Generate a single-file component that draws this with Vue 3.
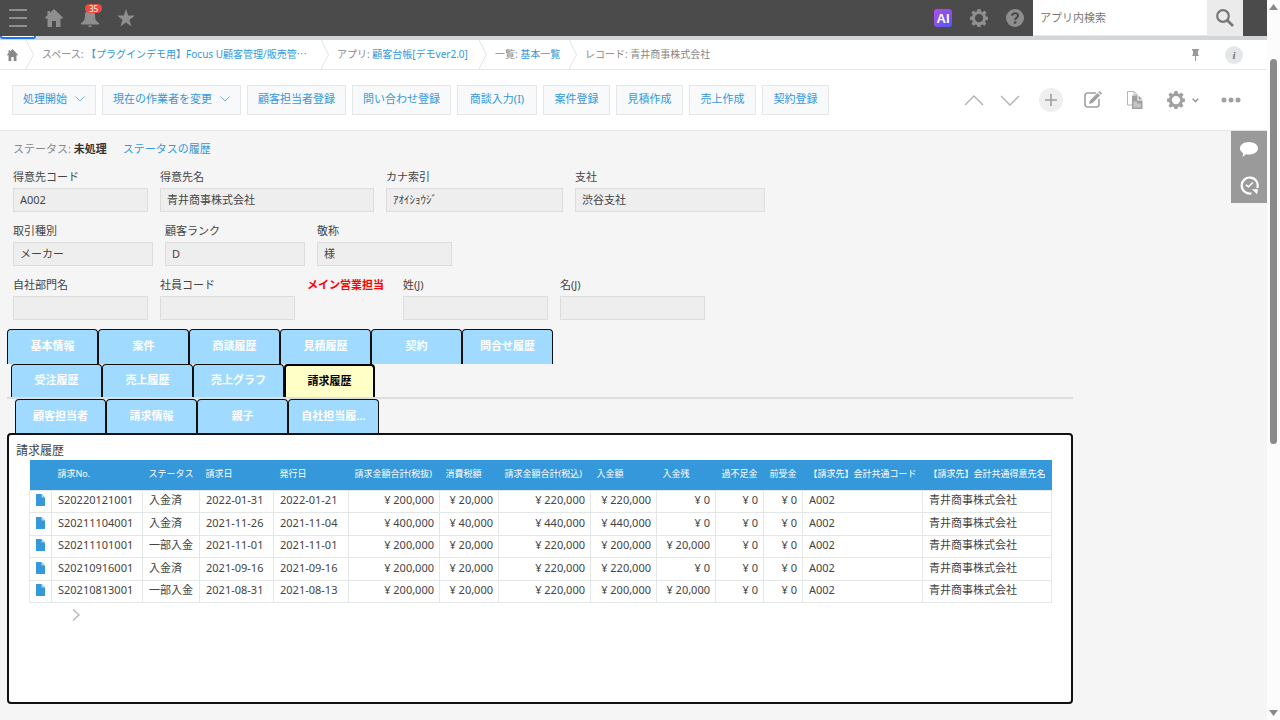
<script setup>
import { ref } from 'vue'

const actions = [
  { label: '処理開始', menu: true },
  { label: '現在の作業者を変更', menu: true },
  { label: '顧客担当者登録' },
  { label: '問い合わせ登録' },
  { label: '商談入力(I)', medium: true },
  { label: '案件登録' },
  { label: '見積作成' },
  { label: '売上作成' },
  { label: '契約登録' },
]

const fieldRows = [
  [
    { id: 'code', label: '得意先コード', value: 'A002', size: 'w135' },
    { id: 'name', label: '得意先名', value: '青井商事株式会社', size: 'w214' },
    { id: 'kana', label: 'カナ索引', value: 'ｱｵｲｼｮｳｼﾞ', size: 'w177' },
    { id: 'branch', label: '支社', value: '渋谷支社', size: 'w190' },
  ],
  [
    { id: 'type', label: '取引種別', value: 'メーカー', size: 'w140' },
    { id: 'rank', label: '顧客ランク', value: 'D', size: 'w140' },
    { id: 'title', label: '敬称', value: '様', size: 'w135' },
  ],
  [
    { id: 'dept', label: '自社部門名', value: '', size: 'w135' },
    { id: 'staff', label: '社員コード', value: '', size: 'w135' },
    { id: 'main', label: 'メイン営業担当', heading: true, size: 'w84' },
    { id: 'last', label: '姓(J)', value: '', size: 'w145' },
    { id: 'first', label: '名(J)', value: '', size: 'w145' },
  ],
]

const tabRows = [
  ['基本情報', '案件', '商談履歴', '見積履歴', '契約', '問合せ履歴'],
  ['受注履歴', '売上履歴', '売上グラフ', '請求履歴'],
  ['顧客担当者', '請求情報', '親子', '自社担当履...'],
]
const activeTab = ref('請求履歴')

const columns = [
  '', '請求No.', 'ステータス', '請求日', '発行日', '請求金額合計(税抜)', '消費税額',
  '請求金額合計(税込)', '入金額', '入金残', '過不足金', '前受金',
  '【請求先】会計共通コード', '【請求先】会計共通得意先名',
]
const rows = [
  ['S20220121001', '入金済', '2022-01-31', '2022-01-21', '¥ 200,000', '¥ 20,000', '¥ 220,000', '¥ 220,000', '¥ 0', '¥ 0', '¥ 0', 'A002', '青井商事株式会社'],
  ['S20211104001', '入金済', '2021-11-26', '2021-11-04', '¥ 400,000', '¥ 40,000', '¥ 440,000', '¥ 440,000', '¥ 0', '¥ 0', '¥ 0', 'A002', '青井商事株式会社'],
  ['S20211101001', '一部入金', '2021-11-01', '2021-11-01', '¥ 200,000', '¥ 20,000', '¥ 220,000', '¥ 200,000', '¥ 20,000', '¥ 0', '¥ 0', 'A002', '青井商事株式会社'],
  ['S20210916001', '入金済', '2021-09-16', '2021-09-16', '¥ 200,000', '¥ 20,000', '¥ 220,000', '¥ 220,000', '¥ 0', '¥ 0', '¥ 0', 'A002', '青井商事株式会社'],
  ['S20210813001', '一部入金', '2021-08-31', '2021-08-13', '¥ 200,000', '¥ 20,000', '¥ 220,000', '¥ 200,000', '¥ 20,000', '¥ 0', '¥ 0', 'A002', '青井商事株式会社'],
]

const gear =
  'M8.3 0h3.4l.5 2.6 1.7.7L16.1 1.800l2.300 2.300-1.500 2.200.7 1.700 2.400.5v3.400l-2.500.5-.7 1.700 1.500 2.200-2.400 2.300-2.200-1.500-1.600.7-.5 2.500H8.300l-.5-2.500-1.700-.7-2.200 1.500-2.300-2.300 1.500-2.200-.7-1.700L0 11.900V8.500L2.400 8l.7-1.700-1.500-2.200 2.300-2.300 2.200 1.500 1.700-.7zM10 5.500a4.600 4.600 0 1 0 0 9.200a4.600 4.600 0 1 0 0-9.200z'
</script>

<template>
  <div class="window">
    <div class="page">
      <header class="topbar">
        <nav class="top-nav" aria-label="グローバル">
          <button class="icon-btn" aria-label="メニュー">
            <svg width="18" height="18" viewBox="0 0 18 18"><path d="M0 1h18M0 9h18M0 17h18" stroke="currentColor" stroke-width="2" /></svg>
          </button>
          <button class="icon-btn" aria-label="ポータル">
            <svg width="18" height="18" viewBox="0 0 18 18" fill="currentColor"><path d="M9 0l9 8.600-1.200 1.400L15.500 9v9H11v-6H7v6H2.500V9L1.200 10 0 8.600 2.500 6.200V2H5v1.800z" /></svg>
          </button>
          <button class="icon-btn" aria-label="通知">
            <svg width="18" height="18" viewBox="0 0 18 18" fill="currentColor"><path d="M9 0a2 2 0 0 1 1.800 1.300C13.500 2 14 4 14 6.500c0 4 1 6 4 7.500v1.500H0V14c3-1.500 4-3.500 4-7.500C4 4 4.500 2 7.200 1.300A2 2 0 0 1 9 0zM7 16.500h4a2 1.500 0 0 1-4 0z" /></svg>
            <span class="badge">35</span>
          </button>
          <button class="icon-btn" aria-label="お気に入り">
            <svg width="18" height="18" viewBox="0 0 18 18" fill="currentColor"><path d="M9 0l2.200 6.500H18l-5.500 4.200 2 6.800L9 13.500l-5.500 4 2-6.800L0 6.500h6.800z" /></svg>
          </button>
        </nav>
        <div class="top-tools">
          <button class="icon-btn" aria-label="AI"><span class="ai">AI</span></button>
          <button class="icon-btn" aria-label="設定">
            <svg width="18" height="18" viewBox="0 0 20 20" fill="currentColor" fill-rule="evenodd"><path :d="gear" /></svg>
          </button>
          <button class="icon-btn" aria-label="ヘルプ">
            <svg width="18" height="18" viewBox="0 0 18 18"><circle cx="9" cy="9" r="9" fill="currentColor" /><path d="M6.200 6.800C6.300 3.300 12 3.500 12 6.700c0 2-2.800 2-2.800 4.200" fill="none" stroke="#4b4b4b" stroke-width="2.200" /><circle cx="9.100" cy="13.600" r="1.400" fill="#4b4b4b" /></svg>
          </button>
          <form class="search" @submit.prevent>
            <input type="search" placeholder="アプリ内検索" aria-label="アプリ内検索" />
            <button aria-label="検索">
              <svg width="18" height="18" viewBox="0 0 18 18" fill="none" stroke="#777" stroke-width="2.200"><circle cx="7" cy="7" r="5.800" /><path d="M11 11l6 6" stroke-width="2.600" /></svg>
            </button>
          </form>
        </div>
      </header>
      <div class="strip"><span class="strip-mark"></span></div>

      <nav class="crumbs" aria-label="パンくず">
        <a href="#" class="crumb-home" aria-label="ホーム">
          <svg width="11" height="12" viewBox="0 0 18 18" preserveAspectRatio="none" fill="currentColor"><path d="M9 0l9 8.600-1.200 1.400L15.500 9v9H11v-6H7v6H2.500V9L1.200 10 0 8.600 2.500 6.200V2H5v1.800z" /></svg>
        </a>
        <svg class="sep" width="8" height="29" viewBox="0 0 8 29"><path d="M0 0l7.500 14.500L0 29" /></svg>
        <span class="crumb space">スペース: <a href="#">【プラグインデモ用】Focus U顧客管理/販売管<span class="cjk">…</span></a></span>
        <svg class="sep" width="8" height="29" viewBox="0 0 8 29"><path d="M0 0l7.500 14.500L0 29" /></svg>
        <span class="crumb app">アプリ: <a href="#">顧客台帳[デモver2.0]</a></span>
        <svg class="sep" width="8" height="29" viewBox="0 0 8 29"><path d="M0 0l7.500 14.500L0 29" /></svg>
        <span class="crumb list">一覧: <a href="#">基本一覧</a></span>
        <svg class="sep" width="8" height="29" viewBox="0 0 8 29"><path d="M0 0l7.500 14.500L0 29" /></svg>
        <span class="crumb">レコード: 青井商事株式会社</span>
        <span class="crumb-tools">
          <button aria-label="ピン留め">
            <svg width="7" height="12" viewBox="0 0 7 12" fill="#9a9a9a"><path d="M0 0h7v1.500H6v3.500l1 2H4v5H3V7H0l1-2V1.500H0z" /></svg>
          </button>
          <button class="info" aria-label="情報">i</button>
        </span>
      </nav>

      <div class="toolbar">
        <div class="actions">
          <button v-for="a in actions" :key="a.label" class="action" :class="{ medium: a.medium }">
            {{ a.label }}
            <svg v-if="a.menu" width="10" height="6" viewBox="0 0 10 6" fill="none" stroke="#6fb5e6"><path d="M.5.5L5 5 9.500.5" /></svg>
          </button>
        </div>
        <div class="record-tools">
          <button class="tool" aria-label="前のレコード"><svg width="20" height="11" viewBox="0 0 20 11" fill="none" stroke="#b0b0b0" stroke-width="1.300"><path d="M1 10L10 1l9 9" /></svg></button>
          <button class="tool" aria-label="次のレコード"><svg width="20" height="11" viewBox="0 0 20 11" fill="none" stroke="#b0b0b0" stroke-width="1.300"><path d="M1 1l9 9 9-9" /></svg></button>
          <button class="tool wide" aria-label="追加"><svg width="24" height="24" viewBox="0 0 24 24"><circle cx="12" cy="12" r="12" fill="#efefef" /><path d="M12 6v12M6 12h12" stroke="#a0a0a0" stroke-width="1.600" /></svg></button>
          <button class="tool edit" aria-label="編集"><svg width="18" height="18" viewBox="0 0 18 18"><path d="M12 2H3.500A2.500 2.500 0 0 0 1 4.500v9A2.500 2.500 0 0 0 3.500 16h9a2.500 2.500 0 0 0 2.500-2.500V8" fill="none" stroke="#a0a0a0" stroke-width="1.600" /><path d="M5 13l1-3.500L13.500 2 16 4.500 8.500 12zM14.300 1.200L15.500 0 18 2.500l-1.200 1.200z" fill="#a0a0a0" /></svg></button>
          <button class="tool wide" aria-label="複製"><svg width="16" height="18" viewBox="0 0 16 18"><path d="M5 14H.5V.5H7l3 3V5M7 .5V4h3" fill="none" stroke="#b5b5b5" /><path d="M5 4.500h5.500v5h5V18H5z" fill="#a0a0a0" /><path d="M11.500 4.500l4 4h-4z" fill="#a0a0a0" /><path d="M6.500 10.500H10v2h4v4H6.500z" fill="#c4c4c4" /></svg></button>
          <button class="tool cog" aria-label="アプリの設定"><svg width="18" height="18" viewBox="0 0 20 20" fill="#a0a0a0" fill-rule="evenodd"><path :d="gear" /></svg><svg width="7" height="5" viewBox="0 0 7 5" fill="none" stroke="#8f8f8f" stroke-width="1.400"><path d="M.7.7l2.800 2.800L6.300.7" /></svg></button>
          <button class="tool wide" aria-label="その他"><svg width="20" height="6" viewBox="0 0 20 6" fill="#a0a0a0"><circle cx="3" cy="3" r="2.500" /><circle cx="10" cy="3" r="2.500" /><circle cx="17" cy="3" r="2.500" /></svg></button>
        </div>
      </div>

      <div class="body">
        <main class="record">
          <p class="status">ステータス: <b>未処理</b><a href="#">ステータスの履歴</a></p>
          <div class="fields">
            <div v-for="(row, i) in fieldRows" :key="i" class="field-row">
              <div v-for="f in row" :key="f.id" class="field" :class="f.size">
                <strong v-if="f.heading" class="heading">{{ f.label }}</strong>
                <template v-else>
                  <label :for="f.id">{{ f.label }}</label>
                  <input :id="f.id" type="text" :value="f.value" readonly />
                </template>
              </div>
            </div>
          </div>

          <div class="tabs" role="tablist">
            <div v-for="(row, i) in tabRows" :key="i" class="tab-row" :class="'tab-row-' + (i + 1)">
              <button
                v-for="t in row"
                :key="t"
                class="tab"
                :class="{ active: t === activeTab }"
                role="tab"
                :aria-selected="t === activeTab"
                @click="activeTab = t"
              >{{ t }}</button>
            </div>
          </div>

          <section class="panel">
            <h2>請求履歴</h2>
            <table>
              <colgroup><col v-for="(c, i) in columns" :key="i" :class="'c' + i" /></colgroup>
              <thead>
                <tr><th v-for="(c, i) in columns" :key="i" scope="col">{{ c }}</th></tr>
              </thead>
              <tbody>
                <tr v-for="r in rows" :key="r[0]">
                  <td class="doc">
                    <a href="#" :aria-label="r[0]"><svg width="9" height="12" viewBox="0 0 9 12"><path d="M0 0h5.500L9 3.500V12H0z" fill="#3498db" /><path d="M5.500 0L9 3.500H5.500z" fill="#a5d3f1" /></svg></a>
                  </td>
                  <td v-for="(v, i) in r" :key="i" :class="{ num: i > 3 && i < 11 }">{{ v }}</td>
                </tr>
              </tbody>
            </table>
            <button class="next" aria-label="次へ"><svg width="8" height="12" viewBox="0 0 8 12" fill="none" stroke="#b5b5b5" stroke-width="1.300"><path d="M1 .5L7 6l-6 5.500" /></svg></button>
          </section>
        </main>
        <aside class="side">
          <button aria-label="コメント"><svg width="18" height="15" viewBox="0 0 18 15" fill="#fff"><path d="M9 0c5 0 9 2.800 9 6.300s-4 6.300-9 6.300c-1 0-2-.1-3-.4L2.500 15l.7-3.800C1.200 10 0 8.300 0 6.300 0 2.800 4 0 9 0z" /></svg></button>
          <button aria-label="変更履歴"><svg width="19" height="19" viewBox="0 0 19 19" fill="none" stroke="#fff" stroke-width="2.200"><path d="M11.500 17.300A8 8 0 1 1 17.300 12" /><path d="M5.800 8.800l2.700 1.900L12.800 6.500" stroke-width="1.600" /><path d="M12 13.300h6l-1 5z" fill="#fff" stroke="none" /></svg></button>
        </aside>
      </div>
    </div>

    <div class="scrollbar" aria-hidden="true">
      <svg width="9" height="6" viewBox="0 0 9 6" fill="#8a8a8a"><path d="M4.500 0L9 6H0z" /></svg>
      <div class="track"><div class="thumb"></div></div>
      <svg width="9" height="6" viewBox="0 0 9 6" fill="#8a8a8a"><path d="M0 0h9L4.500 6z" /></svg>
    </div>
  </div>
</template>

<style>
body {
  margin: 0;
  background: #f5f5f5;
}
</style>

<style scoped>
.window {
  display: flex;
  min-height: 100vh;
  font: 11px/16px "Noto Sans", "Noto Sans CJK JP", sans-serif;
  color: #444;
}
.window * {
  box-sizing: border-box;
}
button,
input {
  font: inherit;
  color: inherit;
  margin: 0;
  padding: 0;
  border: 0;
  background: none;
  border-radius: 0;
}
button {
  cursor: pointer;
  white-space: nowrap;
}
svg {
  display: block;
  flex: none;
}
a {
  color: #3498db;
  text-decoration: none;
}
.page {
  flex: 1;
  min-width: 0;
}

.topbar {
  display: flex;
  justify-content: space-between;
  height: 36px;
  background: #4b4b4b;
}
.top-nav,
.top-tools {
  display: flex;
}
.top-tools {
  padding-right: 24px;
}
.icon-btn {
  position: relative;
  display: flex;
  align-items: center;
  justify-content: center;
  width: 36px;
  height: 36px;
  color: #8e8e8e;
}
.badge {
  position: absolute;
  top: 4px;
  left: 13px;
  width: 17px;
  height: 9px;
  border-radius: 5px;
  background: #e74c3c;
  color: #fff;
  font-size: 8px;
  line-height: 9px;
}
.ai {
  width: 18px;
  height: 18px;
  border-radius: 3px;
  background: linear-gradient(135deg, #b04df0, #8a50e8 45%, #4a5cf5);
  color: #fff;
  font: bold 13px/19px "Liberation Sans", sans-serif;
}
.search {
  display: flex;
}
.search input {
  width: 174px;
  padding: 0 7px;
  background: #fff;
  border-bottom: 1px solid #e3e7e8;
}
.search input::placeholder {
  color: #777;
  opacity: 1;
}
.search button {
  display: flex;
  align-items: center;
  justify-content: center;
  width: 36px;
  background: #ebebeb;
}
.strip {
  height: 4px;
  background: #d3d6d8;
}
.strip-mark {
  display: block;
  width: 36px;
  height: 3px;
  background: #fff;
  border: 2px solid #1675f0;
  border-top: 0;
  border-radius: 0 0 3px 3px;
}

.crumbs {
  display: flex;
  align-items: center;
  height: 30px;
  background: #fff;
  border-bottom: 1px solid #e3e7e8;
  font-size: 10px;
  color: #888;
  white-space: nowrap;
}
.crumb-home {
  width: 26px;
  padding-left: 7px;
  color: #888;
}
.sep {
  fill: none;
  stroke: #e0e4e5;
}
.crumb {
  padding: 0 8px 2px;
}
.cjk {
  font-family: "Noto Sans CJK JP", sans-serif;
  line-height: 1;
}
.space {
  min-width: 287px;
}
.app {
  min-width: 150px;
}
.list {
  min-width: 82px;
}
.crumb-tools {
  display: flex;
  align-items: center;
  gap: 26px;
  margin-left: auto;
  padding-right: 24px;
}
.info {
  width: 18px;
  height: 18px;
  border-radius: 50%;
  background: #e3e7e8;
  color: #777;
  font: italic bold 11px/18px "Liberation Serif", serif;
}

.toolbar {
  display: flex;
  align-items: center;
  justify-content: space-between;
  height: 61px;
  padding: 0 13px 0 12px;
  background: #fff;
  border-bottom: 1px solid #e3e7e8;
}
.actions {
  display: flex;
  gap: 6px;
}
.action {
  display: flex;
  align-items: center;
  justify-content: center;
  gap: 8px;
  min-width: 67px;
  height: 30px;
  padding: 0 10px 2px;
  background: #f7f9fa;
  border: 1px solid #e3e7e8;
  color: #3498db;
}
.action.medium {
  min-width: 80px;
}
.record-tools {
  display: flex;
}
.tool {
  display: flex;
  align-items: center;
  justify-content: center;
  gap: 7px;
  width: 36px;
  height: 36px;
}
.tool.wide {
  width: 46px;
}
.tool.edit {
  width: 38px;
}
.tool.cog {
  width: 50px;
}

.body {
  display: flex;
  align-items: flex-start;
}
.record {
  flex: 1;
  min-width: 0;
  padding: 10px 158px 16px 7px;
}
.status {
  margin: 0 0 12px;
  padding: 0 6px;
  color: #888;
}
.status b {
  color: #333;
}
.status a {
  margin-left: 16px;
}
.fields {
  display: flex;
  flex-direction: column;
  gap: 11px;
  padding: 0 6px 9px;
}
.field-row {
  display: flex;
  gap: 12px;
}
.field {
  display: flex;
  flex-direction: column;
  gap: 3px;
}
.field input {
  width: 100%;
  height: 24px;
  padding: 0 6px 2px;
  background: #eee;
  border: 1px solid #ddd;
}
.heading {
  color: #f00;
  white-space: nowrap;
}
.w84 { width: 84px; }
.w135 { width: 135px; }
.w140 { width: 140px; }
.w145 { width: 145px; }
.w177 { width: 177px; }
.w190 { width: 190px; }
.w214 { width: 214px; }

.tab-row {
  display: grid;
  grid-template-columns: repeat(6, 91px);
  height: 35px;
}
.tab-row-2 {
  padding-left: 4px;
  border-bottom: 2px solid #dedede;
}
.tab-row-3 {
  height: 34px;
  padding-left: 8px;
}
.tab {
  background: #a0dafe;
  border: 1px solid #111;
  border-bottom: 0;
  border-radius: 4px 4px 0 0;
  color: #fff;
  font-weight: bold;
  padding-bottom: 2px;
}
.tab.active {
  background: #ffffc8;
  border-width: 2px 2px 0;
  border-color: #000;
  color: #000;
}

.panel {
  min-height: 271px;
  padding: 8px 20px;
  background: #fff;
  border: 2px solid #111;
  border-radius: 4px;
}
.panel h2 {
  margin: 0 0 1px -13px;
  font-size: 12px;
  font-weight: normal;
  line-height: 16px;
}
table {
  width: 100%;
  table-layout: fixed;
  border-collapse: collapse;
}
th {
  height: 30px;
  padding: 0 5px 2px 6px;
  background: #3498db;
  color: #fff;
  font-size: 9px;
  font-weight: normal;
  text-align: left;
  white-space: nowrap;
}
td {
  height: 22px;
  padding: 0 5px 2px 6px;
  border: 1px solid #e3e7e8;
  white-space: nowrap;
  line-height: 16px;
}
tbody tr:nth-child(even) td {
  height: 23px;
}
td.num {
  text-align: right;
}
.c0 { width: 22px; }
.c1 { width: 91px; }
.c2 { width: 57px; }
.c3 { width: 74px; }
.c4 { width: 75px; }
.c5 { width: 91px; }
.c6 { width: 59px; }
.c7 { width: 92px; }
.c8 { width: 66px; }
.c9 { width: 59px; }
.c10 { width: 48px; }
.c11 { width: 39px; }
.c12 { width: 120px; }
.c13 { width: 129px; }
.next {
  margin: 6px 0 0 43px;
}

.side {
  display: flex;
  flex-direction: column;
  width: 36px;
  background: #9a9a9a;
}
.side button {
  display: flex;
  align-items: center;
  justify-content: center;
  height: 36px;
}

.scrollbar {
  display: flex;
  flex-direction: column;
  align-items: center;
  width: 13px;
  padding: 4px 0;
  background: #fcfcfc;
}
.track {
  flex: 1;
  display: flex;
  flex-direction: column;
  padding: 49px 0;
}
.thumb {
  width: 7px;
  height: 64%;
  border-radius: 4px;
  background: #8a8a8a;
}
</style>
